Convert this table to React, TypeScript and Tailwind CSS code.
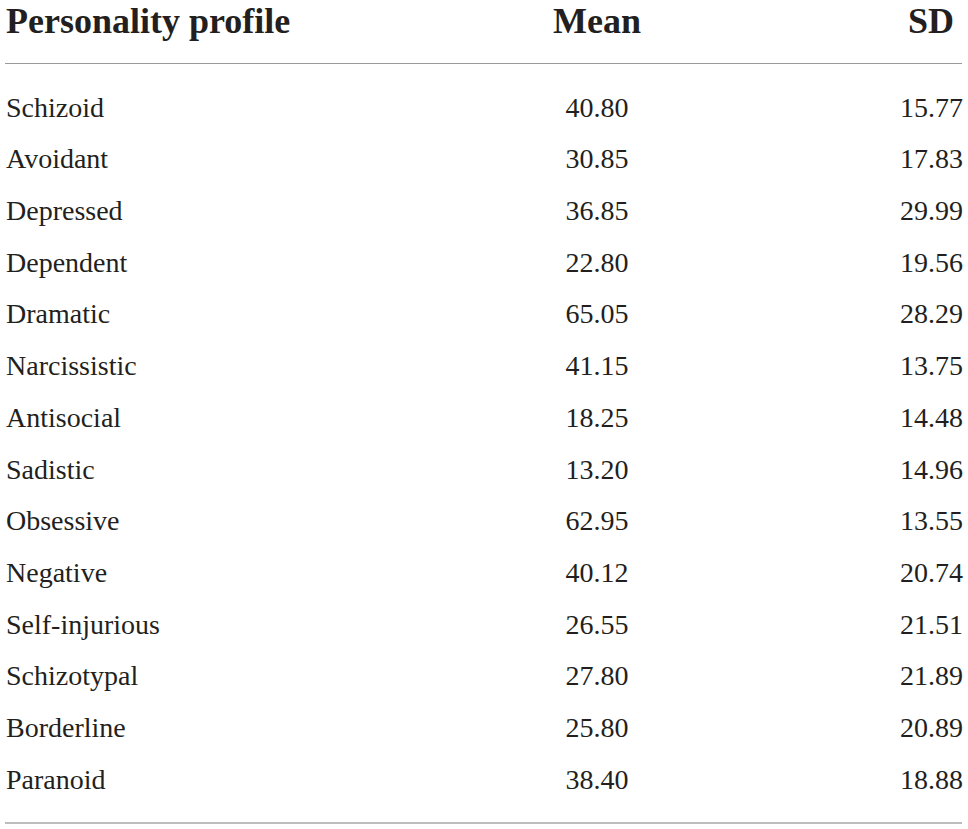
const rows: [string, string, string][] = [
  ["Schizoid", "40.80", "15.77"],
  ["Avoidant", "30.85", "17.83"],
  ["Depressed", "36.85", "29.99"],
  ["Dependent", "22.80", "19.56"],
  ["Dramatic", "65.05", "28.29"],
  ["Narcissistic", "41.15", "13.75"],
  ["Antisocial", "18.25", "14.48"],
  ["Sadistic", "13.20", "14.96"],
  ["Obsessive", "62.95", "13.55"],
  ["Negative", "40.12", "20.74"],
  ["Self-injurious", "26.55", "21.51"],
  ["Schizotypal", "27.80", "21.89"],
  ["Borderline", "25.80", "20.89"],
  ["Paranoid", "38.40", "18.88"],
];

const App = () => {
  return (
    <div className="min-h-[829px] w-[968px] bg-white font-['Liberation_Serif','Times_New_Roman',serif] text-[#231f20]">
      <div className="ml-[5px] w-[957px]">
        <div className="grid grid-cols-[289px_606px_62px] border-b border-[#9a9a9a] h-[64px] pt-[1px] text-[36px] font-bold leading-[40px]">
          <div className="pl-[1px] whitespace-nowrap">Personality profile</div>
          <div className="text-center">Mean</div>
          <div className="text-center">SD</div>
        </div>
        <div className="pt-[17.7px] pb-[16.5px] border-b-2 border-[#bdbdbd]">
          {rows.map(([name, mean, sd]) => (
            <div
              key={name}
              className="grid grid-cols-[289px_606px_62px] h-[51.7px] text-[28px] leading-[51.7px]"
            >
              <div className="pl-[1px] whitespace-nowrap">{name}</div>
              <div className="text-center">{mean}</div>
              <div className="text-center">{sd}</div>
            </div>
          ))}
        </div>
      </div>
    </div>
  );
};

export default App;
